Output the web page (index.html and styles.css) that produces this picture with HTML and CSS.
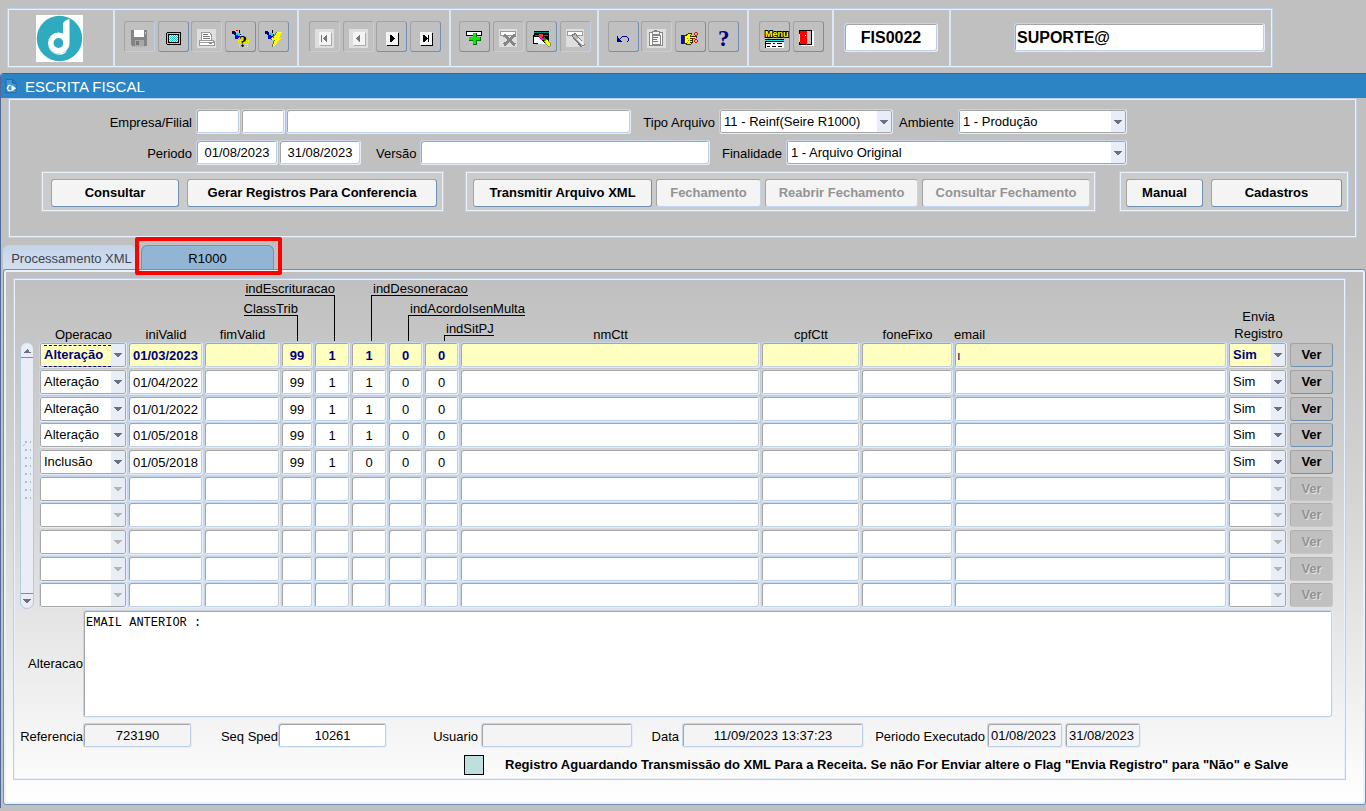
FILE: index.html
```html
<!DOCTYPE html>
<html lang="pt-BR">
<head>
    <meta charset="UTF-8">
    <meta name="viewport" content="width=device-width, initial-scale=1.0">
    <title>Escrita Fiscal - FIS0022</title>
    <link rel="stylesheet" href="styles.css">
</head>
<body>
    <header class="toolbar">
        <div class="tool-group group-logo">
            <svg class="logo" viewBox="0 0 47 47" role="img" aria-label="Logo">
                <rect width="47" height="47" fill="#fff"/>
                <circle cx="23.5" cy="23.5" r="22.7" fill="#2fabbf"/>
                <circle cx="22.5" cy="28" r="7.700" fill="none" stroke="#fff" stroke-width="5.500"/>
                <path d="M33.5 4c-3 .5-7 3-6.500 6l.5 18c0 3.500-2 5-4.500 5.500l3 4c5-1.500 7.500-4.500 7.500-9.500z" fill="#fff"/>
                <path d="M12.500 31c1.500 6 8 9.500 15 6.500l3.500-2c-2 4-6 4.500-9 4-5-.5-9-4-9.500-8.500z" fill="#fff"/>
            </svg>
        </div>
        <div class="tool-group group-file">
            <button class="tool" disabled aria-label="Salvar">
                <svg viewBox="0 0 19 19"><path d="M1 1h15l1 1v15H2l-1-1z" fill="#858585"/><path d="M4 1h10v7H4z" fill="#fff"/><path d="M5 11h9v6H5z" fill="#a8a8a8"/><path d="M6 12h3v4H6z" fill="#777"/><path d="M2 17h14" stroke="#aaa" stroke-dasharray="1 1"/><path d="M15 3h1v2h-1z" fill="#ccc"/></svg>
            </button>
            <button class="tool" aria-label="Tela">
                <svg viewBox="0 0 19 19"><path d="M3 3h13l1 1v11l-1 1H3l-1-1V4z" fill="#000"/><path d="M3 4h13v11H3z" fill="#c0c0c0"/><path d="M4 5h11v9H4z" fill="#000"/><path d="M5 6h9v7H5z" fill="#fff"/><path d="M5 6.500h9M5 8.500h9M5 10.500h9M5 12.500h9" stroke="#2cc" stroke-dasharray="1 1"/><path d="M6 7.500h8M6 9.500h8M6 11.500h8" stroke="#2cc" stroke-dasharray="1 1"/></svg>
            </button>
            <button class="tool" disabled aria-label="Imprimir">
                <svg viewBox="0 0 19 19"><path d="M0 0h19v19H0z" fill="#dedede"/><path d="M4 3h9v1h1v1h1v6H4z" fill="#999"/><path d="M5 4h8v2h1v5H5z" fill="#fff"/><path d="M6 5h5v1H6zM6 7h7v1H6zM6 9h7v1H6z" fill="#777"/><path d="M2 11h15v1h1v5H2z" fill="#999"/><path d="M3 12h13v1H3zM3 14h14v2H3z" fill="#fff"/><path d="M12 14h3v1h-3z" fill="#888"/></svg>
            </button>
            <button class="tool" aria-label="Entrar consulta">
                <svg viewBox="0 0 19 19"><path d="M1 2h2l2 2h4l1 2-1 2-3 2H4V7L1 4z" fill="#000080"/><path d="M5 4h4v3H7l-2-1z" fill="#0df"/><path d="M4 6h2l2 2-2 2H4z" fill="#00f"/><path d="M5 1h2v1H5z" fill="#e00"/><path d="M8 1h1v3H8zM1 3h1v2H1z" fill="#000"/><path d="M9 6h1v2H9z" fill="#fff"/><path d="M11 9.500h6M7 11.500h11M7 13.500h11M8 15.500h10M8 17.500h10" stroke="#ff0" stroke-dasharray="1 1"/><text x="8" y="18" class="glyph" font-size="16">?</text></svg>
            </button>
            <button class="tool" aria-label="Executar consulta">
                <svg viewBox="0 0 19 19"><path d="M1 2h2l2 2h4l1 2-1 2-3 2H4V7L1 4z" fill="#000080"/><path d="M5 4h4v3H7l-2-1z" fill="#0df"/><path d="M4 6h2l2 2-2 2H4z" fill="#00f"/><path d="M8 1h1v3H8zM1 3h1v2H1z" fill="#000"/><path d="M12 3h5v1h-1v2h-1v2h-1v1h2v1h-1v1h-1v1h-1v1h-1v2h-1v1h-1v1h-1v1H8v-3h1v-3h1v-1H7v-1h1V9h1V7h1V6h1V4h1z" fill="#707050"/><path d="M13 3h5v1h-1v2h-1v2h-1v1h2v1h-1v1h-1v1h-1v1h-1v2h-1v1h-1v1h-1v1H9v-3h1v-3h1v-1H8V9h2V7h1V6h1V4h1z" fill="#ff0"/></svg>
            </button>
        </div>
        <div class="tool-group group-nav">
            <button class="tool" disabled aria-label="Primeiro registro">
                <svg viewBox="0 0 19 19"><path d="M0 0h19v19H0z" fill="#dedede"/><path d="M5 4h12v13H5z" fill="#aaa"/><path d="M4 3h12v13H4z" fill="#f4f4f4"/><path d="M6 6h1v7H6zM12 6v7H11L8 10V9l3-3z" fill="#777"/></svg>
            </button>
            <button class="tool" disabled aria-label="Registro anterior">
                <svg viewBox="0 0 19 19"><path d="M0 0h19v19H0z" fill="#dedede"/><path d="M5 4h12v13H5z" fill="#aaa"/><path d="M4 3h12v13H4z" fill="#f4f4f4"/><path d="M11 6v7H10L7 10V9l3-3z" fill="#777"/></svg>
            </button>
            <button class="tool" aria-label="Proximo registro">
                <svg viewBox="0 0 19 19"><path d="M5 4h12v13H5z" fill="#000"/><path d="M4 3h12v13H4z" fill="#f4f4f4"/><path d="M8 6v7h1l4-3V9L9 6z" fill="#000"/></svg>
            </button>
            <button class="tool" aria-label="Ultimo registro">
                <svg viewBox="0 0 19 19"><path d="M5 4h12v13H5z" fill="#000"/><path d="M4 3h12v13H4z" fill="#f4f4f4"/><path d="M7 6v7h1l4-3V9L8 6zM12 6h1v7h-1z" fill="#000"/></svg>
            </button>
        </div>
        <div class="tool-group group-record">
            <button class="tool" aria-label="Inserir registro">
                <svg viewBox="0 0 19 19"><path d="M1 2h16v5H1z" fill="#000"/><path d="M2 3h14v3H2z" fill="#fff"/><path d="M8 4h4v4h4v4h-4v4H8v-4H4V8h4z" fill="#060"/><path d="M8 4h3v4h4v3h-4v4H8v-4H4V8h4z" fill="#0e0"/></svg>
            </button>
            <button class="tool" disabled aria-label="Excluir registro">
                <svg viewBox="0 0 19 19"><path d="M0 0h18v18H0z" fill="#dedede"/><path d="M1 2h16v5H1z" fill="#999"/><path d="M2 3h14v3H2z" fill="#fff"/><path d="M5 6l11 10M16 6L5 16" stroke="#858585" stroke-width="3"/></svg>
            </button>
            <button class="tool" aria-label="Localizar registro">
                <svg viewBox="0 0 19 19"><path d="M2 2h15v11H2z" fill="#000"/><path d="M2 3h15v1H2zM3 6h13v1H3z" fill="#088"/><path d="M2 8h11v7H2z" fill="#fff"/><path d="M1 6h1v9H1zM2 14h4v1H2z" fill="#000"/><path d="M7 5h4l4 5-2 4-4-3z" fill="#000"/><path d="M7 5h4v3H7z" fill="#f33"/><path d="M7 8h3l2 3H9z" fill="#f0f"/><path d="M11 9l2 4 3-1-3-4z" fill="#090"/><path d="M12 12l3-2 3 4v3h-2z" fill="#ff0" stroke="#550" stroke-width=".5"/></svg>
            </button>
            <button class="tool" disabled aria-label="Limpar registro">
                <svg viewBox="0 0 19 19"><path d="M0 0h18v18H0z" fill="#dedede"/><path d="M1 2h16v5H1z" fill="#999"/><path d="M2 3h14v3H2z" fill="#fff"/><path d="M7 5l10 12" stroke="#777" stroke-width="5"/><path d="M8 6l9 10" stroke="#bbb" stroke-width="3"/><path d="M12 10l6 6" stroke="#eee" stroke-width="2"/></svg>
            </button>
        </div>
        <div class="tool-group group-edit">
            <button class="tool" aria-label="Desfazer">
                <svg viewBox="0 0 19 19"><path d="M3 7v6h5v-1H7l-1-1L4 9V7z" fill="#000080"/><path d="M5 11l4-4h3l2 2v3l-1 1" fill="none" stroke="#000080"/></svg>
            </button>
            <button class="tool" disabled aria-label="Lista de valores">
                <svg viewBox="0 0 19 19"><path d="M0 0h19v19H0z" fill="#dedede"/><path d="M2 3h13v13H2z" fill="#fff" stroke="#888"/><path d="M5 6h8v9H5zM5 2h7v3H5z" fill="#f4f4f4" stroke="#888"/><path d="M6 8h5v1H6zM6 10h4v1H6zM6 12h5v1H6z" fill="#777"/><path d="M7 1h3v1H7z" fill="#777"/></svg>
            </button>
            <button class="tool" aria-label="Editar">
                <svg viewBox="0 0 19 19"><path d="M0 6h3v9H0z" fill="#00f"/><path d="M3 6h2V5h2V4h4v2h-1v1h6v2h-4v5h-1v1h-1v1H5v-1H3z" fill="#330"/><path d="M4 7h2V6h1V5h3v1H9v2h6v1H9v1h2v1H9v1h2v1H9v1h1v1H6v-1H4z" fill="#ff0"/><path d="M6 9h1v1H6zM7 11h1v1H7zM6 13h1v1H6z" fill="#880"/><path d="M14 3h2v1h1v2h-1v1h-2V6h-1V4h1zM14 4v2h2V4zM14 10h2v1h1v2h-1v1h-2v-1h-1v-2h1zM14 11v2h2v-2zM12 9h2v1h-2z" fill="#f00" fill-rule="evenodd"/></svg>
            </button>
            <button class="tool" aria-label="Ajuda">
                <svg viewBox="0 0 19 19"><text x="4" y="17" class="glyph help" font-size="23">?</text></svg>
            </button>
        </div>
        <div class="tool-group group-exit">
            <button class="tool" aria-label="Menu">
                <svg viewBox="0 0 19 19"><text x="0" y="8" class="menu-text">Menu</text><path d="M0 10h19v3H0z" fill="#000"/><path d="M0 11h19v1H0z" fill="#0ee"/><path d="M0 13h19v6H0z" fill="#fff"/><path d="M1 14h5v1H1zM8 14h2v1H8zM12 14h5v1h-5zM2 17h3v1H2zM7 17h4v1H7zM13 17h4v1h-4zM0 13h1v6H0z" fill="#000"/></svg>
            </button>
            <button class="tool" aria-label="Sair">
                <svg viewBox="0 0 19 19"><path d="M2 2h13v15H2z" fill="#fff"/><path d="M0 1h13v15H0z" fill="#000"/><path d="M8 2h4v13H8z" fill="#c0c0c0"/><path d="M1 2h6l1 1v13l-3-1H1z" fill="#f00"/><path d="M0 5h1v8H0z" fill="#ff0"/><path d="M6 6h1v1H6z" fill="#fff"/></svg>
            </button>
        </div>
        <div class="tool-group group-code">
            <input type="text" class="field code" value="FIS0022" aria-label="Programa">
        </div>
        <div class="tool-group group-user">
            <input type="text" class="field user" value="SUPORTE@" aria-label="Usuario conectado">
        </div>
    </header>

    <main class="window">
        <div class="titlebar">
            <svg class="title-icon" viewBox="0 0 14 16">
                <path d="M1 1h7v4h4v10H1z" fill="#3d9ad8" stroke="#1d6aa8"/>
                <path d="M9 1l3 3H9z" fill="#3d9ad8" stroke="#1d6aa8"/>
                <path d="M6 7.500H4L2.500 10.500 4 13h2" fill="none" stroke="#fff" stroke-width="1.500"/>
                <path d="M7 7l5 3.500L7 14z" fill="#fff"/>
            </svg>
            <h1>ESCRITA FISCAL</h1>
        </div>

        <section class="panel filters">
            <div class="filter-row">
                <label class="first" for="empresa">Empresa/Filial</label>
                <input type="text" class="field w-code" id="empresa">
                <input type="text" class="field w-code" aria-label="Filial">
                <input type="text" class="field grow" aria-label="Nome da empresa">
                <label for="tipo">Tipo Arquivo</label>
                <select class="field w-tipo" id="tipo"><option>11 - Reinf(Seire R1000)</option></select>
                <label class="tight" for="ambiente">Ambiente</label>
                <select class="field w-ambiente" id="ambiente"><option>1 - Produção</option></select>
            </div>
            <div class="filter-row">
                <label class="first" for="periodo-ini">Periodo</label>
                <input type="text" class="field w-date center" id="periodo-ini" value="01/08/2023">
                <input type="text" class="field w-date center" aria-label="Periodo final" value="31/08/2023">
                <label class="wide" for="versao">Versão</label>
                <input type="text" class="field grow" id="versao">
                <label for="finalidade">Finalidade</label>
                <select class="field w-finalidade" id="finalidade"><option>1 - Arquivo Original</option></select>
            </div>
            <div class="actions">
                <div class="panel action-group consult">
                    <button class="btn">Consultar</button>
                    <button class="btn w-gerar">Gerar Registros Para Conferencia</button>
                </div>
                <div class="panel action-group send">
                    <button class="btn w-transmitir">Transmitir Arquivo XML</button>
                    <button class="btn w-fechar" disabled>Fechamento</button>
                    <button class="btn w-reabrir" disabled>Reabrir Fechamento</button>
                    <button class="btn w-consultar" disabled>Consultar Fechamento</button>
                </div>
                <div class="panel action-group extra">
                    <button class="btn w-manual">Manual</button>
                    <button class="btn w-cadastros">Cadastros</button>
                </div>
            </div>
        </section>

        <nav class="tabs">
            <button class="tab">Processamento XML</button>
            <button class="tab active">R1000</button>
        </nav>

        <section class="tab-page">
            <div class="panel content">
                <div class="records">
                    <div class="scroll">
                        <button class="scroll-btn up" aria-label="Subir"></button>
                        <div class="grip"></div>
                        <button class="scroll-btn down" aria-label="Descer"></button>
                    </div>
                    <table>
                        <colgroup>
                            <col class="c-operacao"><col class="c-ini"><col class="c-fim"><col class="c-class">
                            <col class="c-ind"><col class="c-ind"><col class="c-short"><col class="c-short">
                            <col><col class="c-cpf"><col class="c-fone"><col class="c-email"><col class="c-envia"><col class="c-ver">
                        </colgroup>
                        <thead>
                            <tr>
                                <th>Operacao</th>
                                <th>iniValid</th>
                                <th>fimValid</th>
                                <th><span class="callout to-left level2">ClassTrib</span></th>
                                <th><span class="callout to-left level3">indEscrituracao</span></th>
                                <th><span class="callout to-right level3">indDesoneracao</span></th>
                                <th><span class="callout to-right level2">indAcordoIsenMulta</span></th>
                                <th><span class="callout to-right level1">indSitPJ</span></th>
                                <th>nmCtt</th>
                                <th>cpfCtt</th>
                                <th>foneFixo</th>
                                <th class="left">email</th>
                                <th class="two-lines">Envia Registro</th>
                                <th></th>
                            </tr>
                        </thead>
                        <tbody id="rows"></tbody>
                    </table>
                </div>

                <div class="notes">
                    <label for="alteracao">Alteracao</label>
                    <textarea class="field" id="alteracao">EMAIL ANTERIOR :</textarea>
                </div>

                <div class="details">
                    <label class="d-ref" for="referencia">Referencia</label>
                    <input type="text" class="field center w-num" id="referencia" value="723190" readonly>
                    <label class="d-seq" for="seq">Seq Sped</label>
                    <input type="text" class="field center w-num" id="seq" value="10261">
                    <label class="d-user" for="usuario">Usuario</label>
                    <input type="text" class="field w-user" id="usuario" readonly>
                    <label class="d-data" for="data">Data</label>
                    <input type="text" class="field center w-data" id="data" value="11/09/2023 13:37:23" readonly>
                    <label class="d-exec" for="exec-ini">Periodo Executado</label>
                    <input type="text" class="field w-exec" id="exec-ini" value="01/08/2023" readonly>
                    <input type="text" class="field w-exec" aria-label="Periodo executado final" value="31/08/2023" readonly>
                </div>

                <div class="legend">
                    <span class="swatch"></span>
                    <strong>Registro Aguardando Transmissão do XML Para a Receita. Se não For Enviar altere o Flag "Envia Registro" para "Não" e Salve</strong>
                </div>
            </div>
        </section>
    </main>

<script>
    // operacao, iniValid, fimValid, classTrib, 4 indicadores, nmCtt, cpfCtt, foneFixo, email, envia
    var records = [
        ["Alteração", "01/03/2023", "", "99", "1", "1", "0", "0", "", "", "", "ı", "Sim"],
        ["Alteração", "01/04/2022", "", "99", "1", "1", "0", "0", "", "", "", "", "Sim"],
        ["Alteração", "01/01/2022", "", "99", "1", "1", "0", "0", "", "", "", "", "Sim"],
        ["Alteração", "01/05/2018", "", "99", "1", "1", "0", "0", "", "", "", "", "Sim"],
        ["Inclusão", "01/05/2018", "", "99", "1", "0", "0", "0", "", "", "", "", "Sim"]
    ];
    var names = ["Operacao", "iniValid", "fimValid", "ClassTrib", "indEscrituracao", "indDesoneracao",
        "indAcordoIsenMulta", "indSitPJ", "nmCtt", "cpfCtt", "foneFixo", "email", "Envia Registro"];
    var totalRows = 10;
    var tbody = document.getElementById("rows");

    for (var i = 0; i < totalRows; i++) {
        var record = records[i];
        var off = record ? "" : " disabled";
        var html = "";
        for (var c = 0; c < names.length; c++) {
            var value = record ? record[c] : "";
            var label = ' aria-label="' + names[c] + " " + (i + 1) + '"';
            if (c === 0 || c === 12) {
                html += '<td><select class="field"' + label + off + "><option>" + value + "</option></select></td>";
            } else {
                var align = c < 8 ? " center" : "";
                html += '<td><input type="text" class="field' + align + '"' + label + ' value="' + value + '"></td>';
            }
        }
        html += '<td><button class="btn ver"' + off + ">Ver</button></td>";
        var tr = document.createElement("tr");
        if (i === 0) tr.className = "current";
        tr.innerHTML = html;
        tbody.appendChild(tr);
    }
</script>
</body>
</html>
```
FILE: styles.css
```css
* {
  box-sizing:border-box;
}
body {
  margin:0;
  padding-top:8px;
  background:#c0c0c0;
  color:#000;
  font-family:"Liberation Sans", Arial, sans-serif;
  font-size:13px;
  line-height:16px;
}
button, input, select, textarea {
  font:inherit;
  color:inherit;
  margin:0;
}

/* etched blue / white frame */
.panel {
  border:1px solid #bdd0e8;
  box-shadow:inset 0 0 0 1px #e9f1fc;
}
.field {
  height:25px;
  min-width:0;
  padding:0 4px;
  border:1px solid;
  border-color:#c5d6ec #e4edf9 #e4edf9 #c5d6ec;
  border-radius:3px;
  background:#fff;
  box-shadow:inset 1px 1px 0 #a3a6ab, inset -1px -1px 0 #bdd0e8;
  outline:none;
}
.field.center {
  padding:0 2px;
  text-align:center;
}
.field.grow {
  flex:1;
}
.field:read-only:not(select) {
  background:#f4f4f4;
}
select.field {
  appearance:none;
  padding:0 18px 0 4px;
  background:
    conic-gradient(from -45deg at 50% 100%, #6b7088 90deg, transparent 0) right 4px top 10px / 8px 4px no-repeat,
    linear-gradient(#e8edf6, #e8edf6) right 1px top 1px / 14px 22px no-repeat,
    #fff;
  box-shadow:inset 0 0 0 1px #a3a6ab;
  opacity:1;
}
select.field:disabled {
  background:
    conic-gradient(from -45deg at 50% 100%, #b4b4b4 90deg, transparent 0) right 4px top 10px / 8px 4px no-repeat,
    linear-gradient(#e8edf6, #e8edf6) right 1px top 1px / 14px 22px no-repeat,
    #fff;
}
.btn {
  height:28px;
  padding:0;
  border:1px solid;
  border-color:#a3a3a3 #6f8fb3 #6f8fb3 #a3a3a3;
  border-radius:3px;
  background:#f4f4f4;
  font-weight:bold;
}
.btn:disabled {
  border-color:#a3a3a3 #c3d5ec #c3d5ec #a3a3a3;
  color:#939393;
}

/* toolbar */
.toolbar {
  display:flex;
  width:1266px;
  max-width:100%;
  height:60px;
  margin-left:7px;
  border:1px solid #bdd0e8;
  box-shadow:inset 0 0 0 1px #e9f1fc;
}
.tool-group {
  display:flex;
  justify-content:space-between;
  padding:12px 8px 0 9px;
  border-right:2px solid #dbe7f7;
}
.group-logo {
  width:107px;
  padding:6px 0 0 28px;
}
.group-file {
  width:184px;
}
.group-nav {
  width:152px;
  padding-left:10px;
}
.group-record {
  width:148px;
  padding:12px 6px 0 8px;
}
.group-edit {
  width:150px;
}
.group-exit {
  width:85px;
  padding-left:10px;
}
.group-code {
  width:117px;
  padding:14px 10px 0;
}
.group-user {
  flex:1;
  justify-content:flex-end;
  padding:14px 7px 0;
  border:none;
}
.logo {
  width:47px;
  height:47px;
}
.tool {
  display:block;
  width:31px;
  height:31px;
  padding:4px 0 0 5px;
  border:1px solid;
  border-color:#a3a3a3 #6f8fb3 #6f8fb3 #a3a3a3;
  border-radius:3px;
  background:none;
}
.tool:disabled {
  border-color:#a3a3a3 #bdd0e8 #bdd0e8 #a3a3a3;
}
.tool svg {
  display:block;
  width:19px;
  height:19px;
  overflow:visible;
  shape-rendering:crispEdges;
}
.glyph {
  font-family:"Liberation Serif", serif;
  font-weight:bold;
}
.help {
  fill:#000080;
}
.menu-text {
  font-family:"Liberation Sans Narrow", "Liberation Sans", sans-serif;
  font-size:9px;
  font-weight:bold;
  fill:#ff0;
  stroke:#000;
  stroke-width:2px;
  paint-order:stroke;
}
.toolbar .field {
  height:29px;
  font-size:16px;
  font-weight:bold;
}
.code {
  width:94px;
  text-align:center;
}
.user {
  width:251px;
  padding:0 2px;
}

/* window */
.window {
  margin-top:5px;
  padding-bottom:3px;
  border-top:1px solid #456288;
  border-left:1px solid #4e6a98;
  border-top-left-radius:4px;
}
.titlebar {
  display:flex;
  align-items:center;
  gap:7px;
  height:24px;
  padding-left:4px;
  background:#2c84c5;
  border-top-left-radius:3px;
}
.title-icon {
  width:13px;
  height:16px;
}
.titlebar h1 {
  margin:2px 0 0;
  color:#fff;
  font-size:15px;
  font-weight:normal;
}

/* filters */
.filters {
  height:140px;
  margin:0 9px 0 7px;
  padding-top:10px;
}
.filter-row {
  display:flex;
  align-items:center;
  gap:1px;
  height:25px;
  margin-bottom:6px;
  padding-right:229px;
}
.filter-row label {
  padding:2px 3px 0 11px;
}
.filter-row .first {
  width:186px;
  text-align:right;
}
.filter-row .tight {
  padding-left:5px;
}
.filter-row .wide {
  padding-left:14px;
}
.w-code {
  width:44px;
}
.w-tipo {
  width:174px;
}
.w-ambiente {
  width:169px;
}
.w-date {
  width:82px;
}
.w-finalidade {
  width:341px;
}
.actions {
  display:flex;
  padding:0 7px 0 32px;
}
.action-group {
  display:flex;
  gap:8px;
  height:41px;
  padding:7px 6px 0 9px;
  background:#cbcbcb;
}
.action-group .btn {
  width:128px;
}
.action-group.send {
  gap:4px;
  margin-left:21px;
  padding:7px 5px 0 7px;
}
.action-group.extra {
  margin-left:auto;
  padding:7px 6px 0;
}
.action-group .w-gerar {
  width:250px;
}
.action-group .w-transmitir {
  width:179px;
}
.action-group .w-fechar {
  width:105px;
}
.action-group .w-reabrir {
  width:153px;
}
.action-group .w-consultar {
  width:168px;
}
.action-group .w-manual {
  width:77px;
}
.action-group .w-cadastros {
  width:131px;
}

/* tabs */
.tabs {
  display:flex;
  gap:5px;
  height:24px;
  margin:7px 0 0 2px;
}
.tab {
  position:relative;
  width:133px;
  padding:3px 0 0 4px;
  border:none;
  border-radius:6px 6px 0 0;
  background:linear-gradient(#c4d3e8, #d3e0f1);
  color:#3c4450;
  white-space:nowrap;
}
.tab.active {
  padding:2px 0 0;
  border:1px solid #7591b4;
  border-bottom:none;
  background:#92b5d6;
  color:#000;
}
/* highlight around the open tab */
.tab.active::after {
  content:"";
  position:absolute;
  top:-9px;
  left:-7px;
  right:-9px;
  bottom:-6px;
  border:4px solid #f00;
  border-radius:2px;
}
.tab-page {
  margin-left:2px;
  padding:8px 19px 24px 9px;
  border:1px solid #6f8fb3;
  border-radius:3px;
  background:linear-gradient(#bfbfbf, #d6d6d6 45%, #fff);
  box-shadow:inset 0 0 0 2px #e9f1fc;
}
.content {
  padding:1px 12px 4px 6px;
}

/* records */
.records {
  display:flex;
  gap:5px;
}
.scroll {
  display:flex;
  flex-direction:column;
  width:14px;
  margin-top:62px;
  border:1px solid #b4c8e0;
  border-radius:7px;
  background:#e8edf6;
}
.scroll-btn {
  height:15px;
  padding:0;
  border:none;
  border-radius:7px 7px 0 0;
  border-bottom:1px solid #6f8fb3;
  background:conic-gradient(from 135deg at 50% 0, #6b7088 90deg, transparent 0) center 6px / 8px 4px no-repeat;
}
.scroll-btn.down {
  border-bottom:none;
  border-top:1px solid #6f8fb3;
  border-radius:0 0 7px 7px;
  background:conic-gradient(from -45deg at 50% 100%, #6b7088 90deg, transparent 0) center 5px / 8px 4px no-repeat;
}
.grip {
  flex:1;
  padding:82px 2px 92px;
  background:
    linear-gradient(135deg, transparent 40%, #a9bdd6 40%, #a9bdd6 60%, transparent 60%) 0 4px / 2px 2px no-repeat content-box,
    radial-gradient(circle at 3px 2px, #a9bdd6 1px, transparent 1px) 0 0 / 5px 8px content-box;
}
table {
  flex:1;
  width:100%;
  table-layout:fixed;
  border-collapse:collapse;
}
.c-operacao { width:89px; }
.c-ini { width:76px; }
.c-fim { width:77px; }
.c-class { width:33px; }
.c-ind { width:37px; }
.c-short { width:36px; }
.c-cpf { width:100px; }
.c-fone { width:93px; }
.c-email { width:274px; }
.c-envia { width:61px; }
.c-ver { width:44px; }
th {
  position:relative;
  height:62px;
  padding:0;
  line-height:14px;
  vertical-align:bottom;
  font-weight:normal;
}
th.left {
  text-align:left;
}
th.two-lines {
  padding:0 6px;
  line-height:17px;
}
.callout {
  position:absolute;
  line-height:12px;
  border-bottom:1px solid #000;
  white-space:nowrap;
}
.callout::after {
  content:"";
  position:absolute;
  top:100%;
  width:1px;
  background:#000;
}
.to-left {
  right:16px;
}
.to-right {
  left:20px;
  padding-left:2px;
}
.to-left::after {
  right:0;
}
.to-right::after {
  left:0;
}
.level1 { bottom:6px; }
.level2 { bottom:26px; }
.level3 { bottom:46px; }
.level1::after { height:6px; }
.level2::after { height:26px; }
.level3::after { height:46px; }

tbody tr {
  height:27px;
}
tbody tr:nth-child(3n) {
  height:26px;
}
td {
  padding:0 1px 0 0;
  vertical-align:top;
}
td:nth-child(13) {
  padding-right:2px;
}
td:last-child {
  padding:1px 0 0 1px;
}
td .field, td .btn {
  display:block;
  width:100%;
}
td .field {
  height:26px;
}
.btn.ver {
  height:24px;
  background:#c0c0c0;
}
.btn.ver:disabled {
  border-color:#b0b0b0 #c6c6c6 #c6c6c6 #b0b0b0;
  text-shadow:1px 1px 0 #e4e4e4;
}
.current .field {
  background-color:#ffffc0;
  color:#000080;
  font-weight:bold;
}
.current td:nth-child(12) .field {
  padding:0 2px;
  font-weight:normal;
}
.current td:first-child {
  position:relative;
}
/* dotted focus lines of the current record */
.current td:first-child::after {
  content:"";
  position:absolute;
  top:3px;
  left:5px;
  width:67px;
  height:20px;
  border-top:1px dashed #000080;
  border-bottom:1px dashed #000080;
  pointer-events:none;
}

/* bottom area */
.notes {
  display:flex;
  align-items:center;
  margin:1px 0 5px;
}
.notes label {
  width:63px;
  text-align:right;
}
.notes textarea {
  flex:1;
  height:108px;
  padding:4px 2px;
  font-family:"Liberation Mono", monospace;
  font-size:12px;
  resize:none;
}
.details {
  display:flex;
  align-items:center;
}
.details label {
  padding-top:2px;
  text-align:right;
  white-space:nowrap;
}
.d-ref {
  width:63px;
}
.d-seq {
  width:86px;
}
.d-user {
  width:94px;
  padding-right:3px;
}
.d-data {
  width:49px;
  padding-right:3px;
}
.d-exec {
  width:123px;
  padding-right:2px;
}
.w-num {
  width:109px;
}
.w-user {
  width:152px;
}
.w-data {
  width:182px;
}
.w-exec {
  width:76px;
  padding:0 3px;
}
.w-exec + .w-exec {
  margin-left:2px;
}
.legend {
  display:flex;
  align-items:center;
  gap:21px;
  margin-top:7px;
  padding-left:444px;
}
.swatch {
  width:20px;
  height:20px;
  border:1px solid #000;
  background:#bfdfdf;
}
```
